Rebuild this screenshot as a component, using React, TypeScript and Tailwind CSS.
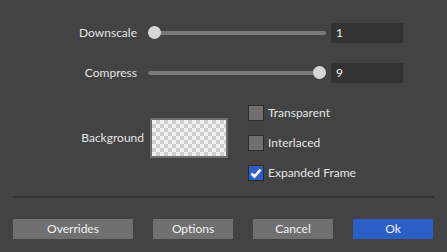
import React from 'react';

const font = { fontFamily: 'Lato, "Open Sans", sans-serif' };

const Slider: React.FC<{ value: number; min: number; max: number }> = ({ value, min, max }) => {
  const pct = (value - min) / (max - min);
  return (
    <div className="relative ml-[11px] h-[20px] w-[178px] flex items-center">
      <div className="h-[4px] w-full rounded-full bg-[#787878]" />
      <div
        className="absolute top-[3px] h-[13px] w-[13px] rounded-full bg-[#d6d6d6]"
        style={{ left: `${pct * (178 - 13)}px` }}
      />
    </div>
  );
};

const Check: React.FC<{ label: string; checked?: boolean }> = ({ label, checked }) => (
  <div className="flex h-[16px] items-center">
    {checked ? (
      <div className="flex h-[16px] w-[16px] items-center justify-center border border-[#2a2a2a] bg-[#2b5fc7]">
        <svg width="12" height="12" viewBox="0 0 12 12">
          <path d="M1.5 6.5 L4.5 9.5 L10.5 2.5" fill="none" stroke="#ffffff" strokeWidth="2.6" />
        </svg>
      </div>
    ) : (
      <div className="h-[16px] w-[16px] border border-[#2a2a2a] bg-[#6f6f6f]" />
    )}
    <span className="ml-[4px] text-[12px] text-[#e4e4e4]">{label}</span>
  </div>
);

const Btn: React.FC<{ label: string; w: string; primary?: boolean }> = ({ label, w, primary }) => (
  <button
    className={`${w} h-[20px] text-[12px] text-[#f0f0f0] flex items-center justify-center ${
      primary ? 'bg-[#2b5fc7]' : 'bg-[#707070]'
    }`}
  >
    {label}
  </button>
);

export default function App() {
  return (
    <div className="w-[447px] h-[252px] bg-[#434343] overflow-hidden flex flex-col" style={font}>
      {/* Downscale */}
      <div className="mt-[23px] flex h-[20px] items-center">
        <div className="w-[137px] text-right text-[12px] text-[#e4e4e4]">Downscale</div>
        <Slider value={1} min={1} max={9} />
        <div className="ml-[5px] flex h-[20px] w-[72px] items-center bg-[#333333] px-[5px] text-[12px] text-[#eeeeee]">1</div>
      </div>

      {/* Compress */}
      <div className="mt-[20px] flex h-[20px] items-center">
        <div className="w-[137px] text-right text-[12px] text-[#e4e4e4]">Compress</div>
        <Slider value={9} min={1} max={9} />
        <div className="ml-[5px] flex h-[20px] w-[72px] items-center bg-[#333333] px-[5px] text-[12px] text-[#eeeeee]">9</div>
      </div>

      {/* Background + options */}
      <div className="mt-[22px] flex items-start">
        <div className="mt-[13px] flex h-[40px] items-center">
          <div className="w-[144px] text-right text-[12px] text-[#e4e4e4]">Background</div>
          <div
            className="ml-[6px] h-[40px] w-[78px] border-2 border-[#6e6e6e]"
            style={{
              backgroundColor: '#f0f0f0',
              backgroundImage:
                'linear-gradient(45deg, #cdcdcd 25%, transparent 25%, transparent 75%, #cdcdcd 75%), linear-gradient(45deg, #cdcdcd 25%, transparent 25%, transparent 75%, #cdcdcd 75%)',
              backgroundSize: '8px 8px',
              backgroundPosition: '0 0, 4px 4px',
            }}
          />
        </div>
        <div className="ml-[20px] flex flex-col gap-[14px]">
          <Check label="Transparent" />
          <Check label="Interlaced" />
          <Check label="Expanded Frame" checked />
        </div>
      </div>

      <div className="mx-[13px] mt-[15px] h-[2px] bg-[#343434]" />

      <div className="mx-[13px] mt-[21px] flex gap-[20px]">
        <Btn label="Overrides" w="w-[120px]" />
        <Btn label="Options" w="w-[80px]" />
        <Btn label="Cancel" w="w-[80px]" />
        <Btn label="Ok" w="w-[80px]" primary />
      </div>
    </div>
  );
}
